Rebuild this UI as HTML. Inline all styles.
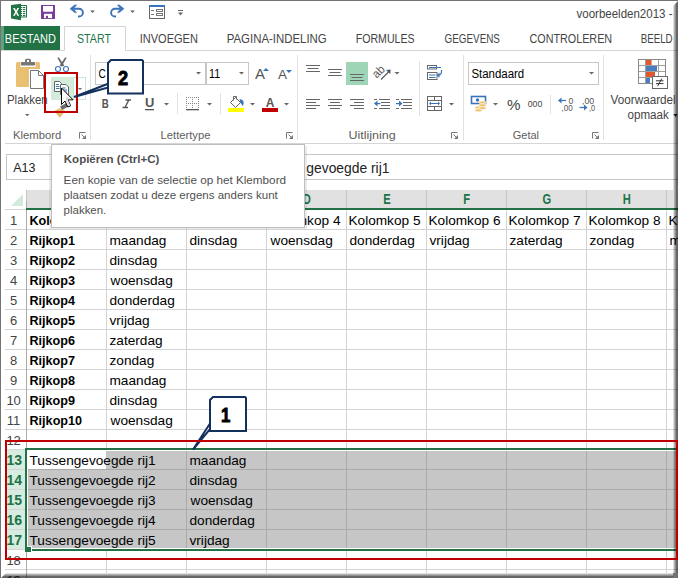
<!DOCTYPE html>
<html><head><meta charset="utf-8"><style>
html,body{margin:0;padding:0;background:#fff;width:678px;height:578px;overflow:hidden}
svg{position:absolute;left:0;top:0;display:block}
text{font-family:"Liberation Sans",sans-serif}
</style></head><body>
<svg width="678" height="578" viewBox="0 0 678 578" shape-rendering="auto">
<rect x="20" y="5" width="7" height="12.5" rx="0.8" fill="#217346"/>
<rect x="21" y="6" width="5" height="10.5" fill="#fff"/>
<rect x="21" y="7" width="1.2" height="1.1" fill="#217346"/><rect x="23" y="7" width="2.3" height="1.1" fill="#217346"/>
<rect x="21" y="9" width="1.2" height="1.1" fill="#217346"/><rect x="23" y="9" width="2.3" height="1.1" fill="#217346"/>
<rect x="21" y="11" width="1.2" height="1.1" fill="#217346"/><rect x="23" y="11" width="2.3" height="1.1" fill="#217346"/>
<rect x="21" y="13" width="1.2" height="1.1" fill="#217346"/><rect x="23" y="13" width="2.3" height="1.1" fill="#217346"/>
<rect x="21" y="15" width="1.2" height="1.1" fill="#217346"/><rect x="23" y="15" width="2.3" height="1.1" fill="#217346"/>
<path d="M11 5 L21 3.8 L21 20.2 L11 18.5 Z" fill="#217346"/>
<path d="M13 8 h1.8 l1.3 2.5 1.3-2.5 h1.7 l-2.1 3.9 2.2 3.9 h-1.8 l-1.3-2.6-1.3 2.6 h-1.8 l2.2-3.9 z" fill="#fff"/>
<rect x="41" y="5" width="14" height="14" fill="#7d3c98"/>
<path d="M43 6 H53 V11 Q53 11.8 52.2 11.8 H43.8 Q43 11.8 43 11 Z" fill="#fff"/>
<rect x="44" y="13.8" width="8" height="4.3" fill="#fff"/>
<rect x="46" y="15.8" width="2" height="2.4" fill="#7d3c98"/>
<path d="M73.5 8.75 H79 A3.9 3.9 0 0 1 79 16.55 H78" stroke="#3b73b9" stroke-width="1.9" fill="none"/><path d="M70 8.75 L74.6 4.9 L76.6 4.9 L73.4 8.75 L76.6 12.6 L74.6 12.6 Z" fill="#3b73b9" stroke="#3b73b9" stroke-width="0.5"/>
<path d="M90 10.5 H95 L92.5 13 Z" fill="#666"/>
<g transform="translate(194 0) scale(-1 1)"><path d="M73.5 8.75 H79 A3.9 3.9 0 0 1 79 16.55 H78" stroke="#3b73b9" stroke-width="1.9" fill="none"/><path d="M70 8.75 L74.6 4.9 L76.6 4.9 L73.4 8.75 L76.6 12.6 L74.6 12.6 Z" fill="#3b73b9" stroke="#3b73b9" stroke-width="0.5"/></g>
<path d="M130 10.5 H135 L132.5 13 Z" fill="#666"/>
<rect x="149.5" y="5.5" width="15" height="13" fill="#fff" stroke="#666" stroke-width="1"/>
<rect x="149" y="5" width="16" height="2" fill="#3b73b9"/>
<rect x="156.5" y="9.5" width="6" height="2" fill="none" stroke="#777" stroke-width="1"/>
<rect x="156.5" y="13.5" width="6" height="2" fill="none" stroke="#777" stroke-width="1"/>
<rect x="151" y="10" width="3" height="1" fill="#777"/><rect x="151" y="14" width="3" height="1" fill="#777"/>
<rect x="178" y="10" width="5" height="1" fill="#666"/><path d="M178 12.5 H183 L180.5 15.5 Z" fill="#666"/>
<rect x="1" y="26" width="59" height="25" fill="#217346"/>
<rect x="1" y="26" width="3" height="25" fill="#5fa37c"/>
<path d="M0 50.5 H64.5 V26.5 H125.5 V50.5 H678" stroke="#d4d4d4" stroke-width="1" fill="none"/>
<rect x="5" y="143" width="673" height="1" fill="#d5d5d5"/>
<rect x="90" y="55" width="1" height="85" fill="#e1e1e1"/>
<rect x="297" y="55" width="1" height="85" fill="#e1e1e1"/>
<rect x="463" y="55" width="1" height="85" fill="#e1e1e1"/>
<rect x="603" y="55" width="1" height="85" fill="#e1e1e1"/>
<path d="M79.5 138.5 V132.5 H85.5" stroke="#777" stroke-width="1" fill="none"/><path d="M81.5 134.5 L85.5 138.5" stroke="#777" stroke-width="1"/><path d="M86 135 V139 H82 Z" fill="#777"/>
<path d="M286.5 138.5 V132.5 H292.5" stroke="#777" stroke-width="1" fill="none"/><path d="M288.5 134.5 L292.5 138.5" stroke="#777" stroke-width="1"/><path d="M293 135 V139 H289 Z" fill="#777"/>
<path d="M451.5 138.5 V132.5 H457.5" stroke="#777" stroke-width="1" fill="none"/><path d="M453.5 134.5 L457.5 138.5" stroke="#777" stroke-width="1"/><path d="M458 135 V139 H454 Z" fill="#777"/>
<path d="M592.5 138.5 V132.5 H598.5" stroke="#777" stroke-width="1" fill="none"/><path d="M594.5 134.5 L598.5 138.5" stroke="#777" stroke-width="1"/><path d="M599 135 V139 H595 Z" fill="#777"/>
<rect x="16" y="62" width="24" height="25" rx="1.5" fill="#e9bf72"/>
<rect x="20.5" y="58" width="15" height="9" fill="#fff"/>
<rect x="21" y="62" width="14" height="3.6" rx="0.8" fill="#777"/><rect x="25" y="58.8" width="6" height="4" rx="1.5" fill="#777"/><rect x="27" y="60" width="2" height="2" fill="#fff"/>
<rect x="29" y="69" width="16" height="21" fill="#fff"/>
<path d="M30.5 70.5 H38.5 L43.5 75.5 V88.5 H30.5 Z" fill="#fff" stroke="#777" stroke-width="1"/>
<path d="M38.5 70.5 V75.5 H43.5" fill="none" stroke="#777" stroke-width="1"/>
<path d="M25 114 H29.5 L27.25 116.25 Z" fill="#666"/>
<path d="M57.3 57.8 L58.9 57.6 L64.3 65.4 L62.4 66.6 Z" fill="#666"/><path d="M66.7 57.8 L65.1 57.6 L59.7 65.4 L61.6 66.6 Z" fill="#666"/>
<circle cx="58" cy="69" r="2.5" fill="none" stroke="#3b73b9" stroke-width="1.1"/><circle cx="66" cy="69" r="2.5" fill="none" stroke="#3b73b9" stroke-width="1.1"/>
<rect x="51" y="77" width="22" height="23" fill="#d3ecdd"/>
<rect x="73.5" y="77.5" width="12" height="22" fill="none" stroke="#c9e7d2" stroke-width="1"/>
<path d="M78 88 H82 L80.0 90.0 Z" fill="#666"/>
<path d="M54.5 81.5 H59.5 L61.5 83.5 V91.5 H54.5 Z" fill="#fff" stroke="#666"/>
<rect x="56" y="84" width="3" height="1" fill="#3b73b9"/><rect x="56" y="86" width="3.5" height="1" fill="#3b73b9"/><rect x="56" y="88" width="3.5" height="1" fill="#3b73b9"/>
<path d="M60.5 84.5 H66 L68.5 87 V94.5 H60.5 Z" fill="#fff" stroke="#666"/>
<rect x="62" y="87.5" width="3.5" height="1" fill="#3b73b9"/><rect x="62" y="89.5" width="5" height="1" fill="#3b73b9"/><rect x="62" y="91.5" width="5" height="1" fill="#3b73b9"/>
<path d="M54 111 L59.7 108.3 L65.4 111 L59.7 117.8 Z" fill="#eab96a"/>
<path d="M60 106.5 L66.5 103 L68.5 106.5 L62 110 Z" fill="#6b6b6b"/>
<path d="M61.5 88 V104.5 L65 101 L67.8 107 L70.6 105.8 L67.9 99.8 L73 99.8 Z" fill="#fff" stroke="#000" stroke-width="1" stroke-linejoin="round"/>
<path d="M66 96 L71.5 99.3 L67.6 99.3 L70 105.3 L68.3 106 L65.6 100.3 Z" fill="#ddd"/>
<rect x="95.5" y="62.5" width="110" height="22" fill="#fff" stroke="#c6c6c6"/>
<rect x="206.5" y="62.5" width="42" height="22" fill="#fff" stroke="#c6c6c6"/>
<path d="M196 72 H201 L198.5 74.5 Z" fill="#666"/>
<path d="M239 72 H244 L241.5 74.5 Z" fill="#666"/>
<path d="M263 71 L266 68 L269 71 Z" fill="#3b73b9"/>
<path d="M286 70 L292 70 L289 73 Z" fill="#3b73b9"/>
<path d="M125.5 100 H131 M122.5 107.5 H128 M128.8 100 L125 107.5" stroke="#555" stroke-width="1.4" fill="none"/>
<rect x="145" y="109" width="9" height="1.3" fill="#555"/>
<path d="M164 103 H169 L166.5 105.5 Z" fill="#666"/>
<rect x="177" y="93" width="1" height="21" fill="#e1e1e1"/>
<path d="M186 97.5 H199 M186 103.5 H199 M186.5 97 V110 M192.5 97 V110 M198.5 97 V110" stroke="#888" stroke-width="1" stroke-dasharray="1 1" fill="none"/>
<rect x="186" y="109" width="13" height="1.3" fill="#555"/>
<path d="M207 103 H212 L209.5 105.5 Z" fill="#666"/>
<rect x="220" y="93" width="1" height="21" fill="#e1e1e1"/>
<path d="M230.5 102.5 L235.5 97.5 L240.5 102.5 L235.5 107.5 Z" fill="#fff" stroke="#666"/>
<path d="M233.5 100.5 V96.5 H236.5 V99.5" fill="none" stroke="#666"/>
<path d="M239.5 99.2 Q243.8 99.5 243.6 103 L243 106.2 L240.3 102.6 Z" fill="#3b73b9"/>
<rect x="228" y="108" width="16" height="4" fill="#ffff00"/>
<path d="M250 103 H255 L252.5 105.5 Z" fill="#666"/>
<rect x="262" y="108" width="16" height="4" fill="#c00000"/>
<path d="M284 103 H289 L286.5 105.5 Z" fill="#666"/>
<rect x="306.0" y="65" width="14" height="1" fill="#666"/>
<rect x="307.5" y="68" width="11" height="1" fill="#666"/>
<rect x="306.0" y="71" width="14" height="1" fill="#666"/>
<rect x="328.0" y="69" width="14" height="1" fill="#666"/>
<rect x="329.5" y="72" width="11" height="1" fill="#666"/>
<rect x="328.0" y="75" width="14" height="1" fill="#666"/>
<rect x="346" y="62" width="22" height="23" fill="#9fd5b7"/>
<rect x="350.0" y="74" width="14" height="1" fill="#666"/>
<rect x="351.5" y="77" width="11" height="1" fill="#666"/>
<rect x="350.0" y="80" width="14" height="1" fill="#666"/>
<rect x="306" y="99" width="14" height="1" fill="#666"/>
<rect x="306" y="102" width="10" height="1" fill="#666"/>
<rect x="306" y="105" width="14" height="1" fill="#666"/>
<rect x="306" y="108" width="10" height="1" fill="#666"/>
<rect x="328.0" y="99" width="14" height="1" fill="#666"/>
<rect x="330.0" y="102" width="10" height="1" fill="#666"/>
<rect x="328.0" y="105" width="14" height="1" fill="#666"/>
<rect x="330.0" y="108" width="10" height="1" fill="#666"/>
<rect x="350" y="99" width="14" height="1" fill="#666"/>
<rect x="354" y="102" width="10" height="1" fill="#666"/>
<rect x="350" y="105" width="14" height="1" fill="#666"/>
<rect x="354" y="108" width="10" height="1" fill="#666"/>
<text x="0" y="0" font-size="12" fill="#555" transform="translate(376.8 78.8) rotate(-45)" textLength="12.5" lengthAdjust="spacingAndGlyphs">ab</text>
<path d="M381 79.5 L389.5 71" stroke="#555" stroke-width="1.1"/><path d="M390.6 69.4 L390.2 74 L386 70 Z" fill="#555"/>
<path d="M394.5 72 H399.5 L397.0 74.5 Z" fill="#666"/>
<rect x="374" y="99" width="3" height="1" fill="#666"/><rect x="379" y="99" width="11" height="1" fill="#666"/>
<rect x="374" y="108" width="3" height="1" fill="#666"/><rect x="379" y="108" width="11" height="1" fill="#666"/>
<rect x="381" y="102" width="9" height="1" fill="#666"/>
<rect x="381" y="105" width="9" height="1" fill="#666"/>
<path d="M374 103.5 L377.5 100.5 V106.5 Z" fill="#3b73b9"/><rect x="377" y="103" width="3.5" height="1.2" fill="#3b73b9"/>
<rect x="396" y="99" width="3" height="1" fill="#666"/><rect x="401" y="99" width="11" height="1" fill="#666"/>
<rect x="396" y="108" width="3" height="1" fill="#666"/><rect x="401" y="108" width="11" height="1" fill="#666"/>
<rect x="403" y="102" width="9" height="1" fill="#666"/>
<rect x="403" y="105" width="9" height="1" fill="#666"/>
<path d="M402.5 103.5 L399 100.5 V106.5 Z" fill="#3b73b9"/><rect x="396" y="103" width="3.5" height="1.2" fill="#3b73b9"/>
<rect x="419" y="61" width="1" height="55" fill="#e1e1e1"/>
<rect x="427.5" y="65.5" width="9" height="3.5" fill="#fff" stroke="#666"/>
<rect x="429" y="67" width="12" height="1" fill="#3b73b9"/>
<rect x="427.5" y="72.5" width="9.5" height="7" fill="#fff" stroke="#666"/>
<rect x="429" y="74.5" width="6.5" height="1" fill="#3b73b9"/><rect x="429" y="77" width="6.5" height="1" fill="#3b73b9"/>
<path d="M441.5 70 Q442 75 438.5 75.2" stroke="#3b73b9" stroke-width="1.2" fill="none"/><path d="M436.5 75.2 L439.5 72.6 V77.8 Z" fill="#3b73b9"/>
<rect x="427.5" y="96.5" width="14" height="14" fill="none" stroke="#666"/>
<path d="M428 100.5 H441 M428 106.5 H441 M434.5 97 V100 M434.5 107 V110" stroke="#666" stroke-width="1"/>
<path d="M430 103.5 H439" stroke="#3b73b9" stroke-width="1"/><path d="M429 103.5 L431 101.5 V105.5 Z M440 103.5 L438 101.5 V105.5 Z" fill="#3b73b9"/>
<path d="M449 103 H454 L451.5 105.5 Z" fill="#666"/>
<rect x="468.5" y="62.5" width="130" height="22" fill="#fff" stroke="#c6c6c6"/>
<path d="M589 72 H594 L591.5 74.5 Z" fill="#666"/>
<rect x="471.5" y="96.5" width="14" height="7" fill="#fff" stroke="#3b73b9" stroke-width="1.6"/><circle cx="477.5" cy="100" r="1.7" fill="#3b73b9"/>
<ellipse cx="478.5" cy="107.5" rx="3.6" ry="1.5" fill="#efc46f" stroke="#fff" stroke-width="0.6"/>
<ellipse cx="478.5" cy="110.3" rx="3.6" ry="1.5" fill="#efc46f" stroke="#fff" stroke-width="0.6"/>
<ellipse cx="482.5" cy="102.5" rx="3.6" ry="1.5" fill="#efc46f" stroke="#fff" stroke-width="0.6"/>
<ellipse cx="482.5" cy="105.3" rx="3.6" ry="1.5" fill="#efc46f" stroke="#fff" stroke-width="0.6"/>
<ellipse cx="482.5" cy="108.1" rx="3.6" ry="1.5" fill="#efc46f" stroke="#fff" stroke-width="0.6"/>
<path d="M493 103 H498 L495.5 105.5 Z" fill="#666"/>

<rect x="550" y="95" width="1" height="19" fill="#e1e1e1"/>
<path d="M559.5 100.5 H566" stroke="#3b73b9" stroke-width="1.2"/><path d="M558 100.5 L561.5 97.5 V103.5 Z" fill="#3b73b9"/>
<path d="M579.5 107.5 H586" stroke="#3b73b9" stroke-width="1.2"/><path d="M587.5 107.5 L584 104.5 V110.5 Z" fill="#3b73b9"/>
<rect x="638.5" y="59.5" width="27" height="24" fill="#fff" stroke="#8a8a8a"/>
<path d="M645.5 60 V83 M658.5 60 V83 M639 65.5 H665 M639 71.5 H665 M639 77.5 H665" stroke="#a0a0a0"/>
<rect x="646" y="60" width="5.6" height="5" fill="#e05a2d"/><rect x="646" y="66" width="11" height="5" fill="#4a7dc0"/><rect x="646" y="72" width="9" height="5" fill="#e05a2d"/><rect x="646" y="78" width="4" height="5" fill="#4a7dc0"/>
<rect x="652.5" y="76.5" width="15" height="12" fill="#fff" stroke="#666"/>
<path d="M656 80.8 H663.5 M656 83.6 H663.5 M661.8 78.5 L657.6 86.2" stroke="#333" stroke-width="1"/>
<rect x="6.5" y="154.5" width="100" height="25" fill="#fff" stroke="#c6c6c6"/>
<path d="M150 154.5 H678 M150 179.5 H678" stroke="#c6c6c6"/>
<rect x="26" y="190" width="647" height="18" fill="#e1e1e1"/>
<rect x="26" y="208" width="652" height="2" fill="#217346"/>
<path d="M11 206 L23 194 L23 206 Z" fill="#d3eadb"/>
<rect x="5" y="449" width="21" height="100" fill="#d6ece0"/>
<rect x="106" y="190" width="1" height="18" fill="#c6c6c6"/>
<rect x="106" y="210" width="1" height="363" fill="#d4d4d4"/>
<rect x="186" y="190" width="1" height="18" fill="#c6c6c6"/>
<rect x="186" y="210" width="1" height="363" fill="#d4d4d4"/>
<rect x="266" y="190" width="1" height="18" fill="#c6c6c6"/>
<rect x="266" y="210" width="1" height="363" fill="#d4d4d4"/>
<rect x="346" y="190" width="1" height="18" fill="#c6c6c6"/>
<rect x="346" y="210" width="1" height="363" fill="#d4d4d4"/>
<rect x="426" y="190" width="1" height="18" fill="#c6c6c6"/>
<rect x="426" y="210" width="1" height="363" fill="#d4d4d4"/>
<rect x="506" y="190" width="1" height="18" fill="#c6c6c6"/>
<rect x="506" y="210" width="1" height="363" fill="#d4d4d4"/>
<rect x="586" y="190" width="1" height="18" fill="#c6c6c6"/>
<rect x="586" y="210" width="1" height="363" fill="#d4d4d4"/>
<rect x="666" y="190" width="1" height="18" fill="#c6c6c6"/>
<rect x="666" y="210" width="1" height="363" fill="#d4d4d4"/>
<rect x="5" y="229" width="21" height="1" fill="#d4d4d4"/>
<rect x="27" y="229" width="651" height="1" fill="#d4d4d4"/>
<rect x="5" y="249" width="21" height="1" fill="#d4d4d4"/>
<rect x="27" y="249" width="651" height="1" fill="#d4d4d4"/>
<rect x="5" y="269" width="21" height="1" fill="#d4d4d4"/>
<rect x="27" y="269" width="651" height="1" fill="#d4d4d4"/>
<rect x="5" y="289" width="21" height="1" fill="#d4d4d4"/>
<rect x="27" y="289" width="651" height="1" fill="#d4d4d4"/>
<rect x="5" y="309" width="21" height="1" fill="#d4d4d4"/>
<rect x="27" y="309" width="651" height="1" fill="#d4d4d4"/>
<rect x="5" y="329" width="21" height="1" fill="#d4d4d4"/>
<rect x="27" y="329" width="651" height="1" fill="#d4d4d4"/>
<rect x="5" y="349" width="21" height="1" fill="#d4d4d4"/>
<rect x="27" y="349" width="651" height="1" fill="#d4d4d4"/>
<rect x="5" y="369" width="21" height="1" fill="#d4d4d4"/>
<rect x="27" y="369" width="651" height="1" fill="#d4d4d4"/>
<rect x="5" y="389" width="21" height="1" fill="#d4d4d4"/>
<rect x="27" y="389" width="651" height="1" fill="#d4d4d4"/>
<rect x="5" y="409" width="21" height="1" fill="#d4d4d4"/>
<rect x="27" y="409" width="651" height="1" fill="#d4d4d4"/>
<rect x="5" y="429" width="21" height="1" fill="#d4d4d4"/>
<rect x="27" y="429" width="651" height="1" fill="#d4d4d4"/>
<rect x="5" y="449" width="21" height="1" fill="#d4d4d4"/>
<rect x="27" y="449" width="651" height="1" fill="#d4d4d4"/>
<rect x="5" y="469" width="21" height="1" fill="#d4d4d4"/>
<rect x="27" y="469" width="651" height="1" fill="#d4d4d4"/>
<rect x="5" y="489" width="21" height="1" fill="#d4d4d4"/>
<rect x="27" y="489" width="651" height="1" fill="#d4d4d4"/>
<rect x="5" y="509" width="21" height="1" fill="#d4d4d4"/>
<rect x="27" y="509" width="651" height="1" fill="#d4d4d4"/>
<rect x="5" y="529" width="21" height="1" fill="#d4d4d4"/>
<rect x="27" y="529" width="651" height="1" fill="#d4d4d4"/>
<rect x="5" y="549" width="21" height="1" fill="#d4d4d4"/>
<rect x="27" y="549" width="651" height="1" fill="#d4d4d4"/>
<rect x="5" y="569" width="21" height="1" fill="#d4d4d4"/>
<rect x="27" y="569" width="651" height="1" fill="#d4d4d4"/>
<rect x="5" y="209" width="21" height="1" fill="#d4d4d4"/>
<rect x="26" y="190" width="1" height="11" fill="#c6c6c6"/><rect x="26" y="201" width="1" height="377" fill="#ababab"/>
<rect x="26" y="208" width="1" height="2" fill="#217346"/>
<rect x="27" y="450" width="651" height="99" fill="#fff"/>
<rect x="28" y="451" width="650" height="97" fill="#c6c6c6"/>
<rect x="28" y="451" width="78" height="18" fill="#fff"/>
<rect x="28" y="469" width="650" height="1" fill="#ababab"/>
<rect x="28" y="489" width="650" height="1" fill="#ababab"/>
<rect x="28" y="509" width="650" height="1" fill="#ababab"/>
<rect x="28" y="529" width="650" height="1" fill="#ababab"/>
<rect x="186" y="451" width="1" height="97" fill="#ababab"/>
<rect x="266" y="451" width="1" height="97" fill="#ababab"/>
<rect x="346" y="451" width="1" height="97" fill="#ababab"/>
<rect x="426" y="451" width="1" height="97" fill="#ababab"/>
<rect x="506" y="451" width="1" height="97" fill="#ababab"/>
<rect x="586" y="451" width="1" height="97" fill="#ababab"/>
<rect x="666" y="451" width="1" height="97" fill="#ababab"/>
<text x="576.50" y="18" font-size="12" fill="#444" textLength="96.00" lengthAdjust="spacingAndGlyphs">voorbeelden2013 -</text>
<text x="4.85" y="43" font-size="13" fill="#fff" textLength="51.18" lengthAdjust="spacingAndGlyphs">BESTAND</text>
<text x="77.00" y="43" font-size="13" fill="#217346" textLength="33.95" lengthAdjust="spacingAndGlyphs">START</text>
<text x="139.75" y="43" font-size="13" fill="#444" textLength="58.18" lengthAdjust="spacingAndGlyphs">INVOEGEN</text>
<text x="226.72" y="43" font-size="13" fill="#444" textLength="99.98" lengthAdjust="spacingAndGlyphs">PAGINA-INDELING</text>
<text x="355.68" y="43" font-size="13" fill="#444" textLength="58.95" lengthAdjust="spacingAndGlyphs">FORMULES</text>
<text x="444.60" y="43" font-size="13" fill="#444" textLength="55.35" lengthAdjust="spacingAndGlyphs">GEGEVENS</text>
<text x="529.50" y="43" font-size="13" fill="#444" textLength="82.62" lengthAdjust="spacingAndGlyphs">CONTROLEREN</text>
<text x="640.65" y="43" font-size="13" fill="#444" textLength="32.04" lengthAdjust="spacingAndGlyphs">BEELD</text>
<text x="13.00" y="139" font-size="11.5" fill="#5e5e5e" textLength="48.39" lengthAdjust="spacingAndGlyphs">Klembord</text>
<text x="160.60" y="139" font-size="11.5" fill="#5e5e5e" textLength="49.79" lengthAdjust="spacingAndGlyphs">Lettertype</text>
<text x="348.40" y="139" font-size="11.5" fill="#5e5e5e" textLength="47.43" lengthAdjust="spacingAndGlyphs">Uitlijning</text>
<text x="512.70" y="139" font-size="11.5" fill="#5e5e5e" textLength="26.33" lengthAdjust="spacingAndGlyphs">Getal</text>
<text x="7.00" y="104" font-size="12" fill="#444" textLength="40.64" lengthAdjust="spacingAndGlyphs">Plakken</text>
<text x="98.50" y="78" font-size="13" fill="#000" textLength="7.30" lengthAdjust="spacingAndGlyphs">C</text>
<text x="209.00" y="78" font-size="13" fill="#000" textLength="11.19" lengthAdjust="spacingAndGlyphs">11</text>
<text x="255.00" y="79" font-size="15" fill="#555">A</text>
<text x="278.00" y="79" font-size="12" fill="#555" textLength="9.00" lengthAdjust="spacingAndGlyphs">A</text>
<text x="101.70" y="108" font-size="12" fill="#555" font-weight="bold" textLength="7.03" lengthAdjust="spacingAndGlyphs">B</text>
<text x="145.00" y="107" font-size="12" fill="#555" font-weight="bold" textLength="9.32" lengthAdjust="spacingAndGlyphs">U</text>
<text x="265.80" y="107" font-size="13" fill="#555" font-weight="bold" textLength="8.64" lengthAdjust="spacingAndGlyphs">A</text>
<text x="471.40" y="78" font-size="12" fill="#000" textLength="52.84" lengthAdjust="spacingAndGlyphs">Standaard</text>
<text x="507.00" y="110" font-size="14" fill="#444" textLength="13.49" lengthAdjust="spacingAndGlyphs">%</text>
<text x="527.70" y="107" font-size="9.5" fill="#444" textLength="14.56" lengthAdjust="spacingAndGlyphs">000</text>
<text x="568.50" y="103.5" font-size="9.5" fill="#555" textLength="4.76" lengthAdjust="spacingAndGlyphs">0</text>
<text x="561.50" y="111" font-size="9.5" fill="#555" textLength="11.24" lengthAdjust="spacingAndGlyphs">,00</text>
<text x="582.00" y="103.5" font-size="9.5" fill="#555" textLength="12.26" lengthAdjust="spacingAndGlyphs">,00</text>
<text x="589.00" y="111" font-size="9.5" fill="#555" textLength="6.22" lengthAdjust="spacingAndGlyphs">,0</text>
<text x="627.50" y="119" font-size="12.5" fill="#444" textLength="41.30" lengthAdjust="spacingAndGlyphs">opmaak</text>
<text x="13.30" y="172" font-size="13" fill="#222" textLength="22.22" lengthAdjust="spacingAndGlyphs">A13</text>
<text x="306.30" y="173" font-size="14" fill="#222" textLength="83.19" lengthAdjust="spacingAndGlyphs">gevoegde rij1</text>
<text x="62.80" y="204" font-size="14" fill="#217346" font-weight="bold" textLength="8.09" lengthAdjust="spacingAndGlyphs">A</text>
<text x="142.80" y="204" font-size="14" fill="#217346" font-weight="bold" textLength="8.09" lengthAdjust="spacingAndGlyphs">B</text>
<text x="222.80" y="204" font-size="14" fill="#217346" font-weight="bold" textLength="8.09" lengthAdjust="spacingAndGlyphs">C</text>
<text x="302.80" y="204" font-size="14" fill="#217346" font-weight="bold" textLength="8.09" lengthAdjust="spacingAndGlyphs">D</text>
<text x="383.20" y="204" font-size="14" fill="#217346" font-weight="bold" textLength="7.47" lengthAdjust="spacingAndGlyphs">E</text>
<text x="463.20" y="204" font-size="14" fill="#217346" font-weight="bold" textLength="6.84" lengthAdjust="spacingAndGlyphs">F</text>
<text x="542.40" y="204" font-size="14" fill="#217346" font-weight="bold" textLength="8.71" lengthAdjust="spacingAndGlyphs">G</text>
<text x="622.80" y="204" font-size="14" fill="#217346" font-weight="bold" textLength="8.09" lengthAdjust="spacingAndGlyphs">H</text>
<text x="705.60" y="204" font-size="14" fill="#217346" font-weight="bold" textLength="3.11" lengthAdjust="spacingAndGlyphs">I</text>
<text x="10.00" y="225" font-size="13" fill="#444">1</text>
<text x="10.00" y="245" font-size="13" fill="#444">2</text>
<text x="10.00" y="265" font-size="13" fill="#444">3</text>
<text x="10.00" y="285" font-size="13" fill="#444">4</text>
<text x="10.00" y="305" font-size="13" fill="#444">5</text>
<text x="10.00" y="325" font-size="13" fill="#444">6</text>
<text x="10.00" y="345" font-size="13" fill="#444">7</text>
<text x="10.00" y="365" font-size="13" fill="#444">8</text>
<text x="10.00" y="385" font-size="13" fill="#444">9</text>
<text x="6.39" y="405" font-size="13" fill="#444">10</text>
<text x="6.87" y="425" font-size="13" fill="#444">11</text>
<text x="6.39" y="445" font-size="13" fill="#444">12</text>
<text x="6.41" y="465" font-size="14" fill="#217346" font-weight="bold">13</text>
<text x="6.41" y="485" font-size="14" fill="#217346" font-weight="bold">14</text>
<text x="6.41" y="505" font-size="14" fill="#217346" font-weight="bold">15</text>
<text x="6.41" y="525" font-size="14" fill="#217346" font-weight="bold">16</text>
<text x="6.41" y="545" font-size="14" fill="#217346" font-weight="bold">17</text>
<text x="6.39" y="565" font-size="13" fill="#444">18</text>
<text x="6.39" y="585" font-size="13" fill="#444">19</text>
<text x="29.50" y="225" font-size="13" fill="#000" font-weight="bold" textLength="72.16" lengthAdjust="spacingAndGlyphs">Kolomkop 1</text>
<text x="108.45" y="225" font-size="13" fill="#000" textLength="72.08" lengthAdjust="spacingAndGlyphs">Kolomkop 2</text>
<text x="188.45" y="225" font-size="13" fill="#000" textLength="72.08" lengthAdjust="spacingAndGlyphs">Kolomkop 3</text>
<text x="268.45" y="225" font-size="13" fill="#000" textLength="72.08" lengthAdjust="spacingAndGlyphs">Kolomkop 4</text>
<text x="348.45" y="225" font-size="13" fill="#000" textLength="72.08" lengthAdjust="spacingAndGlyphs">Kolomkop 5</text>
<text x="428.45" y="225" font-size="13" fill="#000" textLength="72.08" lengthAdjust="spacingAndGlyphs">Kolomkop 6</text>
<text x="508.45" y="225" font-size="13" fill="#000" textLength="72.08" lengthAdjust="spacingAndGlyphs">Kolomkop 7</text>
<text x="588.45" y="225" font-size="13" fill="#000" textLength="72.08" lengthAdjust="spacingAndGlyphs">Kolomkop 8</text>
<text x="668.45" y="225" font-size="13" fill="#000" textLength="72.08" lengthAdjust="spacingAndGlyphs">Kolomkop 9</text>
<text x="109.50" y="245" font-size="13" fill="#000" textLength="56.92" lengthAdjust="spacingAndGlyphs">maandag</text>
<text x="189.50" y="245" font-size="13" fill="#000" textLength="47.81" lengthAdjust="spacingAndGlyphs">dinsdag</text>
<text x="270.55" y="245" font-size="13" fill="#000" textLength="62.23" lengthAdjust="spacingAndGlyphs">woensdag</text>
<text x="349.50" y="245" font-size="13" fill="#000" textLength="65.28" lengthAdjust="spacingAndGlyphs">donderdag</text>
<text x="429.50" y="245" font-size="13" fill="#000" textLength="40.21" lengthAdjust="spacingAndGlyphs">vrijdag</text>
<text x="509.50" y="245" font-size="13" fill="#000" textLength="53.12" lengthAdjust="spacingAndGlyphs">zaterdag</text>
<text x="589.50" y="245" font-size="13" fill="#000" textLength="44.78" lengthAdjust="spacingAndGlyphs">zondag</text>
<text x="669.50" y="245" font-size="13" fill="#000" textLength="56.92" lengthAdjust="spacingAndGlyphs">maandag</text>
<text x="29.50" y="245" font-size="13" fill="#000" font-weight="bold" textLength="45.55" lengthAdjust="spacingAndGlyphs">Rijkop1</text>
<text x="29.50" y="265" font-size="13" fill="#000" font-weight="bold" textLength="45.55" lengthAdjust="spacingAndGlyphs">Rijkop2</text>
<text x="29.50" y="285" font-size="13" fill="#000" font-weight="bold" textLength="45.55" lengthAdjust="spacingAndGlyphs">Rijkop3</text>
<text x="29.50" y="305" font-size="13" fill="#000" font-weight="bold" textLength="45.55" lengthAdjust="spacingAndGlyphs">Rijkop4</text>
<text x="29.50" y="325" font-size="13" fill="#000" font-weight="bold" textLength="45.55" lengthAdjust="spacingAndGlyphs">Rijkop5</text>
<text x="29.50" y="345" font-size="13" fill="#000" font-weight="bold" textLength="45.55" lengthAdjust="spacingAndGlyphs">Rijkop6</text>
<text x="29.50" y="365" font-size="13" fill="#000" font-weight="bold" textLength="45.55" lengthAdjust="spacingAndGlyphs">Rijkop7</text>
<text x="29.50" y="385" font-size="13" fill="#000" font-weight="bold" textLength="45.55" lengthAdjust="spacingAndGlyphs">Rijkop8</text>
<text x="29.50" y="405" font-size="13" fill="#000" font-weight="bold" textLength="45.55" lengthAdjust="spacingAndGlyphs">Rijkop9</text>
<text x="29.50" y="425" font-size="13" fill="#000" font-weight="bold" textLength="52.56" lengthAdjust="spacingAndGlyphs">Rijkop10</text>
<text x="109.50" y="265" font-size="13" fill="#000" textLength="47.81" lengthAdjust="spacingAndGlyphs">dinsdag</text>
<text x="110.55" y="285" font-size="13" fill="#000" textLength="62.23" lengthAdjust="spacingAndGlyphs">woensdag</text>
<text x="109.50" y="305" font-size="13" fill="#000" textLength="65.28" lengthAdjust="spacingAndGlyphs">donderdag</text>
<text x="109.50" y="325" font-size="13" fill="#000" textLength="40.21" lengthAdjust="spacingAndGlyphs">vrijdag</text>
<text x="109.50" y="345" font-size="13" fill="#000" textLength="53.12" lengthAdjust="spacingAndGlyphs">zaterdag</text>
<text x="109.50" y="365" font-size="13" fill="#000" textLength="44.78" lengthAdjust="spacingAndGlyphs">zondag</text>
<text x="109.50" y="385" font-size="13" fill="#000" textLength="56.92" lengthAdjust="spacingAndGlyphs">maandag</text>
<text x="109.50" y="405" font-size="13" fill="#000" textLength="47.81" lengthAdjust="spacingAndGlyphs">dinsdag</text>
<text x="110.55" y="425" font-size="13" fill="#000" textLength="62.23" lengthAdjust="spacingAndGlyphs">woensdag</text>
<text x="29.50" y="465" font-size="13" fill="#000" textLength="126.22" lengthAdjust="spacingAndGlyphs">Tussengevoegde rij1</text>
<text x="189.50" y="465" font-size="13" fill="#000" textLength="56.92" lengthAdjust="spacingAndGlyphs">maandag</text>
<text x="29.50" y="485" font-size="13" fill="#000" textLength="126.22" lengthAdjust="spacingAndGlyphs">Tussengevoegde rij2</text>
<text x="189.50" y="485" font-size="13" fill="#000" textLength="47.81" lengthAdjust="spacingAndGlyphs">dinsdag</text>
<text x="29.50" y="505" font-size="13" fill="#000" textLength="126.22" lengthAdjust="spacingAndGlyphs">Tussengevoegde rij3</text>
<text x="190.55" y="505" font-size="13" fill="#000" textLength="62.23" lengthAdjust="spacingAndGlyphs">woensdag</text>
<text x="29.50" y="525" font-size="13" fill="#000" textLength="126.22" lengthAdjust="spacingAndGlyphs">Tussengevoegde rij4</text>
<text x="189.50" y="525" font-size="13" fill="#000" textLength="65.28" lengthAdjust="spacingAndGlyphs">donderdag</text>
<text x="29.50" y="545" font-size="13" fill="#000" textLength="126.22" lengthAdjust="spacingAndGlyphs">Tussengevoegde rij5</text>
<text x="189.50" y="545" font-size="13" fill="#000" textLength="40.21" lengthAdjust="spacingAndGlyphs">vrijdag</text>
<rect x="25" y="448" width="653" height="2" fill="#217346"/>
<rect x="32" y="549" width="646" height="2" fill="#217346"/>
<rect x="25" y="448" width="2" height="103" fill="#217346"/>
<rect x="27" y="546" width="5" height="6" fill="#fff"/>
<rect x="25" y="547" width="6" height="5" fill="#217346"/>
<rect x="45" y="73" width="32" height="39" fill="none" stroke="#c00000" stroke-width="2"/>
<path d="M211 422 L193 449.5 L211 428 Z" fill="#fff" stroke="#14305c" stroke-width="2" stroke-linejoin="miter"/>
<path d="M213 397 H245 L246 398 V431 H210 V400 Z" fill="#fff" stroke="#14305c" stroke-width="2"/>
<path d="M110 83 L74 97 L110 87 Z" fill="#fff" stroke="#14305c" stroke-width="2" stroke-linejoin="miter"/>
<path d="M111 60 H142 L143 61 V93.5 H108 V63 Z" fill="#fff" stroke="#14305c" stroke-width="2"/>
<text x="220.96" y="422" font-size="20" fill="#000" font-weight="bold" textLength="9.34" lengthAdjust="spacingAndGlyphs" stroke="#000" stroke-width="0.9">1</text>
<text x="118.00" y="85" font-size="20" fill="#000" font-weight="bold" textLength="10.11" lengthAdjust="spacingAndGlyphs" stroke="#000" stroke-width="0.9">2</text>
<rect x="49" y="146" width="258" height="83" fill="rgba(0,0,0,0.08)"/>
<rect x="51.5" y="144.5" width="253" height="83" fill="#fff" stroke="#bebebe"/>
<text x="63.80" y="163" font-size="11.5" fill="#4f4f4f" font-weight="bold">Kopiëren (Ctrl+C)</text>
<text x="63.60" y="184" font-size="11.6" fill="#4f4f4f" textLength="222.45" lengthAdjust="spacingAndGlyphs">Een kopie van de selectie op het Klembord</text>
<text x="63.60" y="199" font-size="11.6" fill="#4f4f4f" textLength="214.23" lengthAdjust="spacingAndGlyphs">plaatsen zodat u deze ergens anders kunt</text>
<text x="63.60" y="214" font-size="11.6" fill="#4f4f4f" textLength="42.72" lengthAdjust="spacingAndGlyphs">plakken.</text>
<rect x="0" y="0" width="678" height="1" fill="#737373"/>
<rect x="0" y="0" width="1" height="578" fill="#737373"/>
<defs><linearGradient id="gr" x1="0" x2="1" y1="0" y2="0"><stop offset="0" stop-color="#000" stop-opacity="0.12"/><stop offset="0.2" stop-color="#000" stop-opacity="0.12"/><stop offset="0.3" stop-color="#000" stop-opacity="0.31"/><stop offset="0.5" stop-color="#000" stop-opacity="0.43"/><stop offset="0.7" stop-color="#000" stop-opacity="0.60"/><stop offset="0.85" stop-color="#000" stop-opacity="0.62"/><stop offset="1" stop-color="#000" stop-opacity="0.56"/></linearGradient><linearGradient id="gb" x1="0" x2="0" y1="0" y2="1"><stop offset="0" stop-color="#000" stop-opacity="0.12"/><stop offset="0.2" stop-color="#000" stop-opacity="0.12"/><stop offset="0.3" stop-color="#000" stop-opacity="0.31"/><stop offset="0.5" stop-color="#000" stop-opacity="0.43"/><stop offset="0.7" stop-color="#000" stop-opacity="0.60"/><stop offset="0.85" stop-color="#000" stop-opacity="0.62"/><stop offset="1" stop-color="#000" stop-opacity="0.56"/></linearGradient></defs>
<path d="M673 6 L678 1 V573 H673 Z" fill="url(#gr)"/>
<path d="M1 578 L6 573 H673 V578 Z" fill="url(#gb)"/>
<path d="M673 573 H678 V578 H673 Z" fill="#000" fill-opacity="0.55"/>
<path d="M673.5 114 H677.5 L675.5 117 Z" fill="#111"/>
<rect x="6" y="441" width="671" height="118" fill="none" stroke="#c00000" stroke-width="2"/>
<text x="610.60" y="104" font-size="12.5" fill="#444" textLength="65.13" lengthAdjust="spacingAndGlyphs">Voorwaardel</text>
</svg>
</body></html>
